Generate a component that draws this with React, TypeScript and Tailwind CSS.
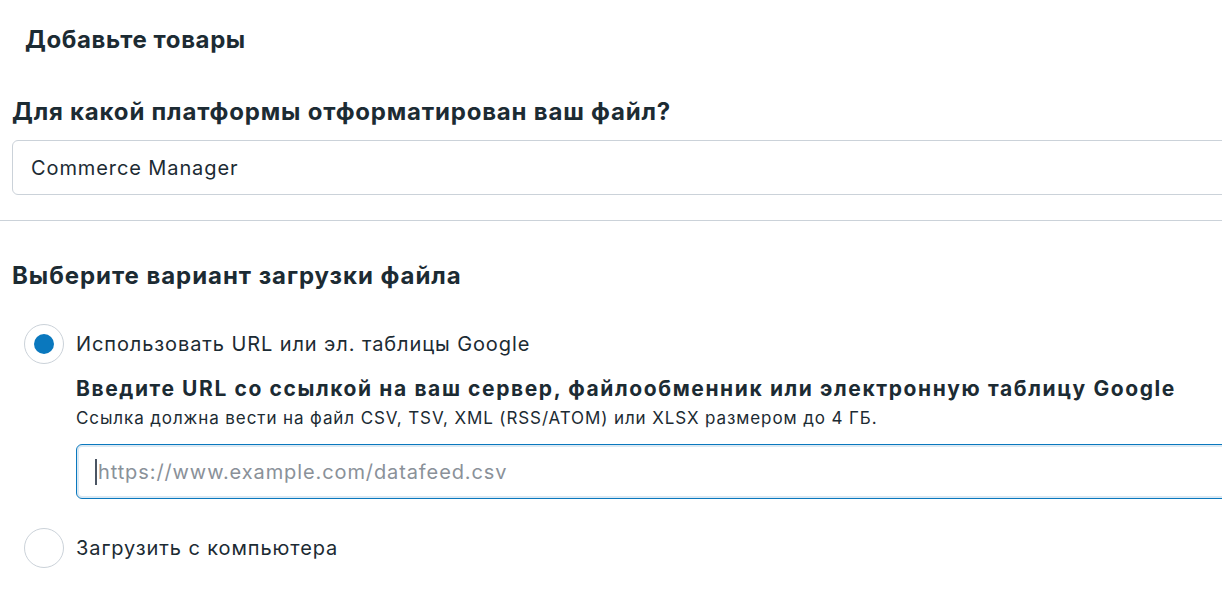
export default function App() {
    return (
        <div
            className="h-[616px] w-[1222px] overflow-hidden bg-white text-[#1c2b33]"
            style={{ fontFamily: 'Inter, "Noto Sans", sans-serif' }}
        >
            <h1 className="pl-[25px] pt-[25px] text-[24px] font-bold leading-[30px] tracking-[0.6px]">Добавьте товары</h1>

            <div className="px-[12px] pt-[42px]">
                <h2 className="text-[24px] font-bold leading-[30px] tracking-[0.8px]">
                    Для какой платформы отформатирован ваш файл?
                </h2>
                <div className="mt-[13px] flex h-[55px] w-[1240px] items-center rounded-[6px] border border-[#cbd2d9] px-[18px] text-[20px] tracking-[0.9px]">
                    Commerce Manager
                </div>
            </div>

            <div className="mt-[25px] h-px w-full bg-[#cbd2d9]" />

            <div className="px-[12px] pt-[40px]">
                <h2 className="text-[24px] font-bold leading-[30px] tracking-[0.95px]">Выберите вариант загрузки файла</h2>

                <div className="mt-[33px] flex items-center gap-[12px] pl-[12px]">
                    <span className="flex h-[40px] w-[40px] shrink-0 items-center justify-center rounded-full border border-[#cbd2d9]">
                        <span className="h-[20px] w-[20px] rounded-full bg-[#0a78be]" />
                    </span>
                    <span className="text-[20px] leading-[28px] tracking-[0.9px]">Использовать URL или эл. таблицы Google</span>
                </div>

                <div className="pl-[64px] pt-[11px]">
                    <p className="whitespace-nowrap text-[21px] font-bold leading-[28px] tracking-[1.6px]">
                        Введите URL со ссылкой на ваш сервер, файлообменник или электронную таблицу Google
                    </p>
                    <p className="mt-[3px] whitespace-nowrap text-[17px] leading-[24px] tracking-[0.9px]">
                        Ссылка должна вести на файл CSV, TSV, XML (RSS/ATOM) или XLSX размером до 4 ГБ.
                    </p>
                    <div className="mt-[14px] flex h-[55px] w-[1200px] items-center rounded-[6px] border border-[#0a78be] px-[18px] text-[20px] tracking-[0.9px] shadow-[inset_0_0_0_2px_#dbe9f3]">
                        <span className="mr-[1px] h-[26px] w-[2px] bg-[#4b5563]" />
                        <span className="text-[#8a9199]">https://www.example.com/datafeed.csv</span>
                    </div>
                </div>

                <div className="mt-[29px] flex items-center gap-[12px] pl-[12px]">
                    <span className="h-[40px] w-[40px] shrink-0 rounded-full border border-[#cbd2d9]" />
                    <span className="text-[20px] leading-[28px] tracking-[0.9px]">Загрузить с компьютера</span>
                </div>
            </div>
        </div>
    );
}
